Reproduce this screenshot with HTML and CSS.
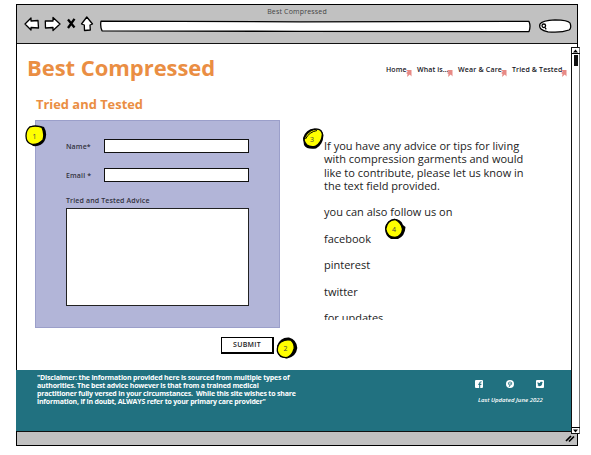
FILE: index.html
```html
<!DOCTYPE html>
<html lang="en">
<head>
<meta charset="utf-8">
<title>Best Compressed</title>
<link rel="stylesheet" href="styles.css">
</head>
<body>
<div class="window">
  <header class="toolbar">
    <div class="window-title">Best Compressed</div>
    <svg class="chrome" width="562" height="27" viewBox="16 16 562 27">
      <g fill="#fff" stroke="#000" stroke-width="1.3" stroke-linejoin="round">
        <path d="M25 24 L31 18 L31 21 L38 20.5 L38.5 28 L31 27.5 L31 30 Z"/>
        <path d="M45.3 21 L53 21 L53 17.5 L60 24 L53 30.5 L53 27.5 L45.5 28 Z"/>
        <path d="M81.5 24 L86.8 17 L92.5 24 L90 25 L90.3 30 L84.5 30.5 L84.3 25 Z"/>
        <path d="M101 21.2 L300 21.8 L529 21.4 Q531 26 529 31.6 L300 31.4 L102 30.8 Q100 26 101 21.2 Z"/>
        <path d="M540 24 Q542 20.5 555 19.8 Q568 20 570 23 Q572 28 569 30 Q561 33 548 31.8 Q538 30 540 24 Z"/>
        <circle cx="543.8" cy="25.8" r="1.8"/>
        <path d="M545 27.5 L546.2 29.3"/>
      </g>
      <path d="M68 19.5 L74.5 27.5 M74.5 18.8 L68 28" stroke="#000" stroke-width="2.3" fill="none"/>
    </svg>
  </header>
  <div class="viewport">
    <div class="page">
      <div class="masthead">
        <h1 class="brand">Best Compressed</h1>
        <nav class="nav">
          <a class="link home">Home<svg class="flag" width="6" height="7" viewBox="0 0 6 7"><path d="M0 0H5.5V6.5L3.8 4.6L1 7L1.5 4L0 3L1.8 1.8Z"/></svg></a>
          <a class="link what">What is...<svg class="flag" width="6" height="7" viewBox="0 0 6 7"><path d="M0 0H5.5V6.5L3.8 4.6L1 7L1.5 4L0 3L1.8 1.8Z"/></svg></a>
          <a class="link wear">Wear &amp; Care<svg class="flag" width="6" height="7" viewBox="0 0 6 7"><path d="M0 0H5.5V6.5L3.8 4.6L1 7L1.5 4L0 3L1.8 1.8Z"/></svg></a>
          <a class="link tried">Tried &amp; Tested<svg class="flag" width="6" height="7" viewBox="0 0 6 7"><path d="M0 0H5.5V6.5L3.8 4.6L1 7L1.5 4L0 3L1.8 1.8Z"/></svg></a>
        </nav>
      </div>
      <h2 class="heading">Tried and Tested</h2>
      <div class="columns">
        <div class="form">
          <div class="panel">
            <div class="field"><span class="label">Name*</span><span class="input"></span></div>
            <div class="field"><span class="label">Email *</span><span class="input"></span></div>
            <div class="label advice">Tried and Tested Advice</div>
            <div class="textarea"></div>
            <svg class="badge one" width="22" height="22" viewBox="0 0 22 22"><path class="shadow" d="M5 1.5Q11-.5 19 2Q23 9 19.5 16Q16 22 8 21L1 15L2 6Z"/><path class="disc" d="M5 1.8Q11 0 17 2.5Q20 9 18 15Q13 20 7 19.3Q1 18 1 11Q1 5 5 1.8Z"/><text x="9.5" y="14">1</text></svg>
          </div>
          <div class="submit">SUBMIT</div>
          <svg class="badge two" width="22" height="22" viewBox="0 0 22 22"><path class="shadow" d="M1 9Q4 0 13 .5Q21 3 21.3 11Q20 20 11 21.4Q3 21 1 14Z"/><path class="disc" d="M1.3 14Q1 8 5 5Q10 1.8 15 3.2Q19 7 18 12Q16 19 11 20.5Q3 21 1.3 14Z"/><text x="9.5" y="14">2</text></svg>
        </div>
        <div class="copy">
          <p>If you have any advice or tips for living<br>with compression garments and would<br>like to contribute, please let us know in<br>the text field provided.</p>
          <p>you can also follow us on</p>
          <p>facebook</p>
          <p>pinterest</p>
          <p>twitter</p>
          <p class="updates">for updates</p>
          <svg class="badge three" width="22" height="22" viewBox="0 0 22 22"><path class="shadow" d="M1 10Q4 1 12 .5Q20 0 21.5 7Q21 17 14 20.5Q5 22 2 17Z"/><path class="disc" d="M2 12Q4 4 12 1.5Q19 0 20.4 6Q20 15 13 18.5Q4 20 2 12Z"/><path d="M3.5 11Q7 4 15 2.5" fill="none" stroke="#000"/><text x="10" y="14">3</text></svg>
          <svg class="badge four" width="22" height="22" viewBox="0 0 22 22"><path class="shadow" d="M1 10Q2 3 10 .8Q17 1 19 7L21.5 9Q21 18 14 21L7 21Q1 18 1 10Z"/><path class="disc" d="M1.8 11Q3 2 11 1.5Q17 4 18.5 11Q18 18 11 19.5Q3 19 1.8 11Z"/><text x="10" y="14">4</text></svg>
        </div>
      </div>
    </div>
    <div class="scrollbar">
      <div class="arrow"><svg width="5" height="4" viewBox="0 0 5 4"><path d="M0 3.5L2.5 .5L5 3.5Z"/></svg></div>
      <div class="thumb"></div>
      <div class="arrow down"><svg width="5" height="4" viewBox="0 0 5 4"><path d="M0 .5L2.5 3.5L5 .5Z"/></svg></div>
    </div>
  </div>
  <footer class="footer">
    <p class="disclaimer">"Disclaimer: the information provided here is sourced from multiple types of<br>authorities. The best advice however is that from a trained medical<br>practitioner fully versed in your circumstances.&nbsp; While this site wishes to share<br>information, if in doubt, ALWAYS refer to your primary care provider"</p>
    <div class="social">
      <div class="icons">
        <svg width="8" height="8" viewBox="0 0 8 8"><rect width="8" height="8" rx="1" fill="#fff"/><path d="M4.7 8V3Q4.7 1.7 6.6 1.7M3.3 4.4H6.4" fill="none" stroke="#217180" stroke-width="1.1"/></svg>
        <svg width="8" height="8" viewBox="0 0 8 8"><circle cx="4" cy="4" r="4" fill="#fff"/><path d="M2.6 4.7Q1.4 2.2 4 1.9Q6.4 2 5.6 4.3Q4.8 5.6 3.9 4.7M4.3 3L3.2 7" fill="none" stroke="#217180" stroke-width=".8"/></svg>
        <svg width="8" height="8" viewBox="0 0 8 8"><rect width="8" height="8" rx="1" fill="#fff"/><path d="M1.5 2Q2.6 3.2 4 3.1Q4 1.6 5.3 1.8L6.8 2L6.2 3Q6 6.4 3 6.3L1.4 5.8L2.6 5.3L1.7 4.3Z" fill="#217180"/></svg>
      </div>
      <div class="updated">Last Updated June 2022</div>
    </div>
  </footer>
  <div class="status"><svg width="10" height="9" viewBox="0 0 10 9"><path d="M1 7L6 2M4 7.5L9 2.5" stroke="#000" stroke-width="1.7"/></svg></div>
</div>
</body>
</html>
```
FILE: styles.css
```css
* { box-sizing: border-box; }
body {
  margin: 0;
  background: #fff;
  font-family: "Open Sans", "Noto Sans", sans-serif;
  color: #222;
  overflow: hidden;
}
h1, h2, p { margin: 0; font-weight: normal; white-space: nowrap; }
.window {
  display: flex;
  flex-direction: column;
  width: 562px;
  height: 442px;
  margin: 4px 0 0 16px;
  border: 1px solid #000;
}
.toolbar {
  height: 39px;
  background: #c1c1c1;
  border-bottom: 1px solid #111;
}
.window-title {
  height: 11px;
  font-size: 7px;
  line-height: 13px;
  letter-spacing: .17px;
  text-align: center;
  color: #444;
}
.chrome { display: block; margin-left: -1px; }
.viewport { display: flex; height: 326px; }
.page { width: 554px; flex: none; }
.masthead { display: flex; height: 50px; }
.brand {
  width: 359px;
  padding: 9px 0 0 10px;
  font-size: 22px;
  line-height: 28px;
  letter-spacing: -.05px;
  font-weight: 700;
  color: #ea8e43;
}
.nav { display: flex; padding-top: 21px; }
.link {
  position: relative;
  flex: none;
  font-size: 7px;
  line-height: 10px;
  font-weight: 600;
  letter-spacing: .1px;
  white-space: nowrap;
  padding-left: 10px;
  color: #16161e;
}
.home { width: 31px; }
.what { width: 41px; }
.wear { width: 54px; letter-spacing: .18px; }
.tried { width: 64px; letter-spacing: .12px; }
.flag { position: absolute; right: -5px; top: 5px; fill: #e88a85; }
.tried .flag { right: -1px; }
.heading {
  padding-left: 19px;
  font-size: 12.9px;
  line-height: 20px;
  font-weight: 700;
  color: #ea8e43;
}
.columns { display: flex; padding: 6px 0 0 18px; }
.form { position: relative; width: 289px; }
.panel {
  position: relative;
  width: 245px;
  height: 208px;
  padding: 18px 30px 0;
  background: #b2b5d8;
  border: 1px solid #9b9fca;
}
.field { display: flex; height: 29px; align-items: flex-start; }
.label {
  width: 38px;
  font-size: 7px;
  line-height: 15px;
  font-weight: 600;
  letter-spacing: .14px;
  color: #333340;
  white-space: nowrap;
}
.input { width: 146px; height: 14px; background: #fff; border: 1px solid #111; border-top-width: 1.5px; }
.advice { height: 11px; line-height: 8px; }
.textarea { width: 183px; height: 98px; background: #fff; border: 1px solid #222; }
.submit {
  width: 53px;
  height: 17px;
  margin: 9px 0 0 186px;
  border: solid #000;
  border-width: 1px 2px 2px 1px;
  background: #fff;
  font-size: 7px;
  line-height: 14px;
  font-weight: 600;
  letter-spacing: .3px;
  text-align: center;
}
.copy {
  position: relative;
  height: 201px;
  padding-top: 19px;
  font-size: 11px;
  line-height: 13.25px;
}
.copy p + p { margin-top: 13.25px; }
.copy p.updates { height: 9px; overflow: hidden; }
.badge { position: absolute; }
.badge .shadow { fill: #000; }
.badge .disc { fill: #ff0; stroke: #000; stroke-width: 1.3; }
.badge text { font-size: 7px; text-anchor: middle; fill: #444; }
.one { left: -11px; top: 4px; }
.two { left: 241px; top: 217px; }
.three { left: -22px; top: 8px; }
.four { left: 60px; top: 98px; }
.scrollbar {
  width: 9px;
  height: 387px;
  margin-top: 3px;
  flex: none;
  display: flex;
  flex-direction: column;
  align-items: center;
  background: #fff;
  border: 1px solid #111;
  border-right: 1.5px solid #777;
  position: relative;
}
.arrow { width: 8px; height: 6px; flex: none; border-bottom: 1px solid #000; display: flex; align-items: center; justify-content: center; }
.thumb { width: 4px; height: 11px; margin-top: 1px; background: #111; }
.down { margin-top: auto; border-top: 1px solid #000; border-bottom: 0; }
.footer {
  display: flex;
  width: 555px;
  height: 61px;
  margin-left: -1px;
  background: #217180;
  color: #fff;
}
.disclaimer {
  width: 440px;
  padding: 4px 0 0 21px;
  font-size: 7px;
  line-height: 8px;
  font-weight: 700;
  letter-spacing: -.2px;
}
.social { width: 90px; padding-top: 10px; }
.icons { display: flex; justify-content: space-between; width: 69px; margin-left: 19px; }
.updated { margin: 7px 0 0 22px; font-size: 6px; line-height: 11px; font-style: italic; font-weight: 600; white-space: nowrap; }
.status {
  display: flex;
  justify-content: flex-end;
  align-items: center;
  flex: 1;
  background: #c1c1c1;
  border-top: 1px solid #111;
  padding-right: 2px;
}
```
